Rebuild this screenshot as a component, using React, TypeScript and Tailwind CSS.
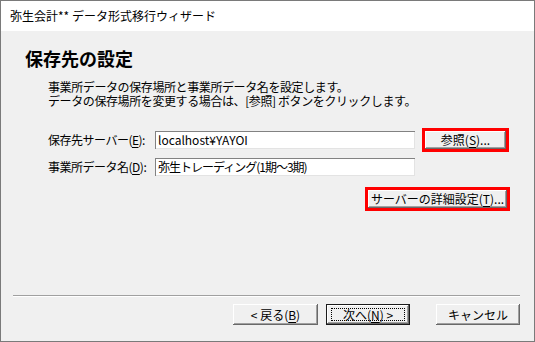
import type { FC, ReactNode } from 'react';

const font = { fontFamily: '"Noto Sans CJK JP", "Noto Sans", sans-serif' };

const Btn: FC<{ w: string; children: ReactNode; primary?: boolean }> = ({ w, children, primary }) => (
  <div
    className={`${w} flex h-full items-center justify-center bg-[#f0f0f0] text-[12px] leading-none text-black ${
      primary
        ? 'border border-[#1a1a1a] shadow-[inset_-1px_-1px_#696969,inset_1px_1px_#ffffff,inset_-2px_-2px_#a0a0a0]'
        : 'shadow-[inset_-1px_-1px_#696969,inset_1px_1px_#ffffff,inset_-2px_-2px_#a0a0a0]'
    }`}
  >
    {children}
  </div>
);

const Field: FC<{ value: string; tight?: boolean }> = ({ value, tight }) => (
  <div
    className={`flex h-[18px] w-[260px] items-center bg-white pl-[3px] text-[12px] leading-none shadow-[inset_1px_1px_#828282,inset_-1px_-1px_#e3e3e3] ${
      tight ? 'tracking-[-1px]' : ''
    }`}
  >
    {value}
  </div>
);

const U: FC<{ children: ReactNode }> = ({ children }) => <span className="underline underline-offset-2">{children}</span>;

export default function App() {
  return (
    <div style={font} className="flex h-[342px] w-[535px] flex-col border border-[#7a7a7a] text-black">
      <div className="flex h-[30px] items-center bg-white pl-[9px] text-[12px]">弥生会計** データ形式移行ウィザード</div>
      <div className="flex flex-1 flex-col bg-[#f0f0f0]">
        <div className="pl-[24px] pt-[15px] text-[18px] font-bold leading-[24px]">保存先の設定</div>
        <div className="mt-[10px] pl-[47px] text-[12px] leading-[14px] tracking-[-0.4px]">
          <div>事業所データの保存場所と事業所データ名を設定します。</div>
          <div>データの保存場所を変更する場合は、[参照] ボタンをクリックします。</div>
        </div>

        <div className="mt-[20px] flex h-[24px] items-center pl-[47px]">
          <div className="w-[107px] text-[12px] tracking-[-0.5px]">
            保存先サーバー(<U>E</U>):
          </div>
          <Field value="localhost¥YAYOI" />
          <div className="ml-[7px] h-[24px] w-[87px] border-[3px] border-[#ff0000]">
            <Btn w="w-full">
              参照(<U>S</U>)...
            </Btn>
          </div>
        </div>

        <div className="mt-[6px] flex h-[18px] items-center pl-[47px]">
          <div className="w-[107px] text-[12px] tracking-[-0.5px]">
            事業所データ名(<U>D</U>):
          </div>
          <Field value="弥生トレーディング(1期～3期)" tight />
        </div>

        <div className="mt-[11px] flex h-[24px] justify-end pr-[24px]">
          <div className="h-[24px] w-[145px] border-[3px] border-[#ff0000]">
            <Btn w="w-full">
              サーバーの詳細設定(<U>T</U>)...
            </Btn>
          </div>
        </div>

        <div className="flex-1" />
        <div className="ml-[12px] mr-[14px] h-[2px] border-t border-b border-t-[#a0a0a0] border-b-white" />
        <div className="mt-[7px] flex h-[21px] justify-end gap-[8px] pr-[14px]">
          <Btn w="w-[85px]">
            &lt; 戻る(<U>B</U>)
          </Btn>
          <div className="mr-[18px] h-full w-[84px]">
            <Btn w="w-full" primary>
              <span className="flex h-[13px] w-[74px] items-center justify-center border border-dotted border-black">
                次へ(<U>N</U>) &gt;
              </span>
            </Btn>
          </div>
          <Btn w="w-[84px]">キャンセル</Btn>
        </div>
        <div className="h-[16px]" />
      </div>
    </div>
  );
}
